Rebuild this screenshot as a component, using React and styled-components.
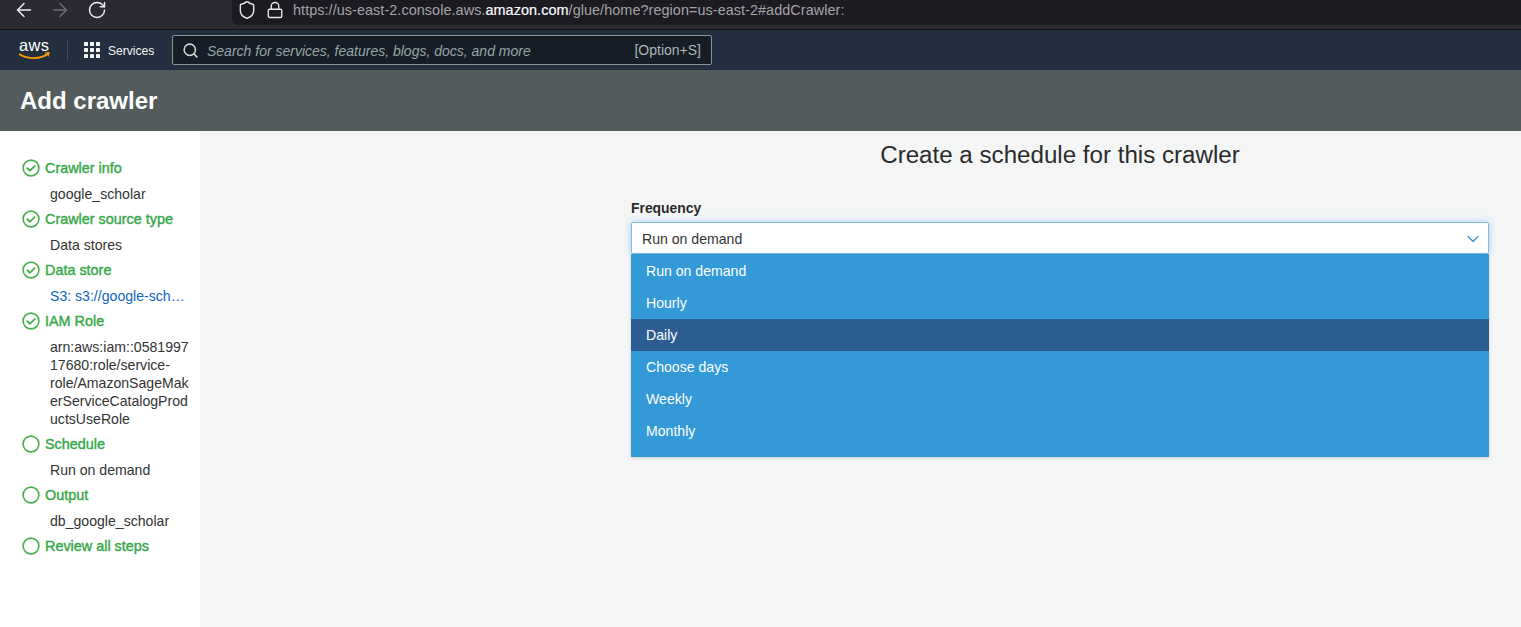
import React from 'react';
import styled, { createGlobalStyle } from 'styled-components';
import { ArrowLeft, ArrowRight, RotateCw, Shield, Lock, Search, ChevronDown } from 'lucide-react';

const GlobalStyle = createGlobalStyle`
  html, body {
    margin: 0;
    padding: 0;
    height: 100%;
    overflow: hidden;
    font-family: "Liberation Sans", Arial, sans-serif;
  }
`;

const Page = styled.div`
  width: 1521px;
  height: 627px;
  display: flex;
  flex-direction: column;
  overflow: hidden;
  -webkit-font-smoothing: antialiased;
`;

const BrowserBar = styled.div`
  height: 29px;
  flex: none;
  background: #2b2a33;
  display: flex;
  align-items: flex-start;
  border-bottom: 1px solid #0f1014;
`;

const NavButtons = styled.div`
  width: 232px;
  height: 20px;
  flex: none;
  display: flex;
  align-items: center;
  gap: 14px;
  padding-left: 13px;
  box-sizing: border-box;
  color: #f1f1f3;

  svg:last-child {
    margin-left: 1.5px;
  }
`;

const UrlBox = styled.div`
  flex: 1;
  height: 25px;
  background: #1c1b22;
  border-bottom-left-radius: 6px;
  display: flex;
  align-items: center;
  padding: 0 0 5px 5px;
  box-sizing: border-box;
  color: #e8e8ea;
  gap: 9px;
`;

const UrlText = styled.span`
  font-size: 14.4px;
  letter-spacing: 0.07px;
  color: #a3a3a8;
  white-space: nowrap;

  b {
    font-weight: 400;
    color: #fbfbfe;
    -webkit-text-stroke: 0.2px #fbfbfe;
  }
`;

const TopNav = styled.div`
  height: 40px;
  flex: none;
  background: #232f3e;
  display: flex;
  align-items: center;
  padding-left: 19px;
`;

const Divider = styled.div`
  width: 1px;
  height: 21px;
  background: #414d5c;
  margin: 0 16px;
`;

const ServicesButton = styled.div`
  display: flex;
  align-items: center;
  gap: 8px;
  color: #f2f3f3;
  font-size: 12.1px;
  width: 88px;
`;

const ServicesLabel = styled.span`
  padding-top: 1px;
`;

const SearchBox = styled.div`
  width: 540px;
  height: 30px;
  box-sizing: border-box;
  background: #161d26;
  border: 1px solid #879596;
  border-radius: 2px;
  display: flex;
  align-items: center;
  padding: 0 10px 0 9px;
  color: #d5dbdb;
`;

const SearchHint = styled.span`
  flex: 1;
  margin-left: 8px;
  padding-top: 1px;
  font-size: 14px;
  font-style: italic;
  color: #95a5a6;
`;

const Shortcut = styled.span`
  font-size: 14px;
  color: #aab7b8;
`;

const PageHeader = styled.div`
  height: 61px;
  flex: none;
  background: #545b5c;
  display: flex;
  align-items: center;
  padding: 1px 0 0 20px;
  box-sizing: border-box;
`;

const Title = styled.h1`
  margin: 0;
  font-size: 24px;
  font-weight: 700;
  color: #fff;
`;

const Body = styled.div`
  flex: 1;
  display: flex;
  min-height: 0;
`;

const Sidebar = styled.nav`
  width: 200px;
  flex: none;
  background: #fff;
  box-sizing: border-box;
  padding: 27px 10px 0 22px;
`;

const StepRow = styled.div`
  display: flex;
  align-items: center;
  gap: 5px;
  height: 19px;
  font-size: 14.4px;
  color: #37a848;
  -webkit-text-stroke: 0.4px #37a848;
`;

const StepDetail = styled.div`
  margin: 8px 0 6px 28px;
  font-size: 14.1px;
  line-height: 18px;
  color: ${(p) => (p.$link ? '#0f66c0' : '#333')};
  white-space: ${(p) => (p.$link ? 'nowrap' : 'pre-line')};
`;

const Main = styled.main`
  flex: 1;
  background: #f4f6f6;
  padding: 10px 32px 0 431px;
  min-width: 0;
`;

const Heading = styled.h2`
  margin: 0 0 30px;
  font-size: 24.15px;
  line-height: 28px;
  font-weight: 400;
  color: #2b2b2b;
  text-align: center;
`;

const FieldLabel = styled.label`
  display: block;
  font-size: 13.9px;
  line-height: 18px;
  font-weight: 700;
  color: #2b2b2b;
  margin-bottom: 5px;
`;

const SelectBox = styled.div`
  height: 32px;
  box-sizing: border-box;
  background: #fff;
  border: 1px solid #7fbde6;
  border-radius: 2px;
  box-shadow: 0 0 6px rgba(52, 152, 219, 0.45);
  display: flex;
  align-items: center;
  justify-content: space-between;
  padding: 1px 5px 0 10px;
  font-size: 14.1px;
  color: #333;
`;

const Menu = styled.ul`
  list-style: none;
  margin: 0;
  padding: 1px 0 10px;
  background: #3399d7;
  box-shadow: 0 1px 3px rgba(0, 0, 0, 0.18);
`;

const MenuItem = styled.li`
  height: 32px;
  display: flex;
  align-items: center;
  padding-left: 15px;
  font-size: 14.1px;
  color: #fff;
  background: ${(p) => (p.$active ? '#2b5c92' : 'transparent')};
`;

const CheckCircle = () => (
  <svg width="18" height="18" viewBox="0 0 18 18" fill="none" stroke="#4caf50" strokeWidth="1.6" strokeLinecap="round" strokeLinejoin="round">
    <circle cx="9" cy="9" r="7.9" />
    <path d="M5.4 9.2l2.6 2.5 4.6-4.6" strokeWidth="1.9" />
  </svg>
);

const EmptyCircle = () => (
  <svg width="18" height="18" viewBox="0 0 18 18" fill="none" stroke="#4caf50" strokeWidth="1.6">
    <circle cx="9" cy="9" r="7.9" />
  </svg>
);

const AwsLogo = () => (
  <svg width="32" height="28" viewBox="0 -3 32 28" fill="none">
    <text x="0" y="12" fontFamily="'Liberation Sans', Arial, sans-serif" fontSize="16.5" fill="#fff" textLength="30">aws</text>
    <path d="M0.5 15.2c8 5 21 5.5 28.5-.4" stroke="#ff9900" strokeWidth="1.8" strokeLinecap="round" />
    <path d="M26.5 14.2l3.6-.6-.9 3.4" stroke="#ff9900" strokeWidth="1.2" strokeLinecap="round" strokeLinejoin="round" />
  </svg>
);

const GridIcon = () => (
  <svg width="16" height="16" viewBox="0 0 16 16" fill="#f2f3f3">
    {[0, 6, 12].flatMap((y) =>
      [0, 6, 12].map((x) => <rect key={`${x}-${y}`} x={x} y={y} width="4" height="4" rx="0.5" />)
    )}
  </svg>
);

const steps = [
  { name: 'Crawler info', done: true, detail: 'google_scholar' },
  { name: 'Crawler source type', done: true, detail: 'Data stores' },
  { name: 'Data store', done: true, detail: 'S3: s3://google-sch…', link: true },
  { name: 'IAM Role', done: true, detail: 'arn:aws:iam::0581997\n17680:role/service-\nrole/AmazonSageMak\nerServiceCatalogProd\nuctsUseRole' },
  { name: 'Schedule', done: false, detail: 'Run on demand' },
  { name: 'Output', done: false, detail: 'db_google_scholar' },
  { name: 'Review all steps', done: false },
];

const frequencies = ['Run on demand', 'Hourly', 'Daily', 'Choose days', 'Weekly', 'Monthly'];

const App = () => (
  <Page>
    <GlobalStyle />
    <BrowserBar>
      <NavButtons>
        <ArrowLeft size={22} strokeWidth={1.6} />
        <ArrowRight size={22} strokeWidth={1.6} color="#6e6d75" />
        <RotateCw size={20} strokeWidth={1.7} />
      </NavButtons>
      <UrlBox>
        <Shield size={20} strokeWidth={1.7} />
        <Lock size={18} strokeWidth={1.8} />
        <UrlText>https://us-east-2.console.aws.<b>amazon.com</b>/glue/home?region=us-east-2#addCrawler:</UrlText>
      </UrlBox>
    </BrowserBar>

    <TopNav>
      <AwsLogo />
      <Divider />
      <ServicesButton>
        <GridIcon />
        <ServicesLabel>Services</ServicesLabel>
      </ServicesButton>
      <SearchBox>
        <Search size={17} strokeWidth={2.2} />
        <SearchHint>Search for services, features, blogs, docs, and more</SearchHint>
        <Shortcut>[Option+S]</Shortcut>
      </SearchBox>
    </TopNav>

    <PageHeader>
      <Title>Add crawler</Title>
    </PageHeader>

    <Body>
      <Sidebar>
        {steps.map((step) => (
          <React.Fragment key={step.name}>
            <StepRow>
              {step.done ? <CheckCircle /> : <EmptyCircle />}
              {step.name}
            </StepRow>
            {step.detail && <StepDetail $link={step.link}>{step.detail}</StepDetail>}
          </React.Fragment>
        ))}
      </Sidebar>
      <Main>
        <Heading>Create a schedule for this crawler</Heading>
        <FieldLabel>Frequency</FieldLabel>
        <SelectBox>
          Run on demand
          <ChevronDown size={20} strokeWidth={1.6} color="#3498d8" />
        </SelectBox>
        <Menu>
          {frequencies.map((f) => (
            <MenuItem key={f} $active={f === 'Daily'}>{f}</MenuItem>
          ))}
        </Menu>
      </Main>
    </Body>
  </Page>
);

export default App;
